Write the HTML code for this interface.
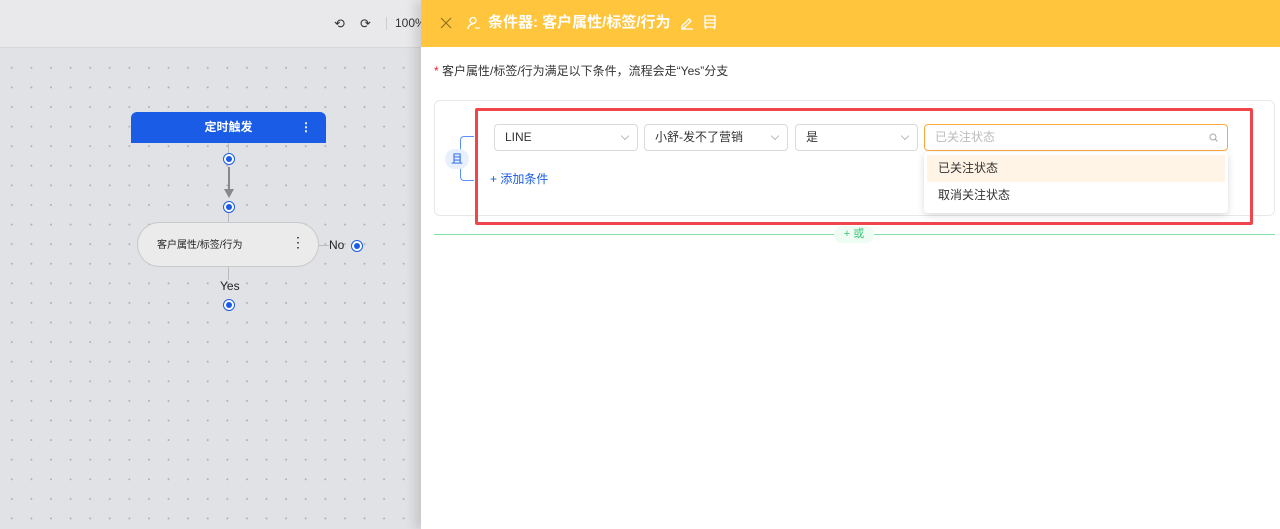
<!DOCTYPE html>
<html><head><meta charset="utf-8"><style>
*{box-sizing:border-box;margin:0;padding:0}
body{width:1280px;height:529px;overflow:hidden;position:relative;font-family:"Liberation Sans","Noto Sans CJK SC",sans-serif;background:#e1e2e5}
.top{position:absolute;left:0;top:0;width:421px;height:48px;background:#e9e9eb;border-bottom:1px solid #d6d6d9}
.canvas{position:absolute;left:0;top:49px;width:421px;height:480px;background-color:#e1e2e5;background-image:radial-gradient(circle,#b0b1b6 0.8px,transparent 1.1px);background-size:19.6px 19.6px;background-position:2px 9px}
.panel{position:absolute;left:421px;top:0;width:859px;height:529px;background:#fff;box-shadow:-6px 0 10px rgba(0,0,0,.12)}
.hdr{height:47px;background:#ffc53d;color:#fff;position:relative}
.abs{position:absolute}
.sel{position:absolute;top:124px;height:27px;border:1px solid #d9d9d9;border-radius:4px;font-size:12px;line-height:25px;color:#333;padding:0 10px;background:#fff}
.chev{position:absolute;right:9px;top:8px;width:6px;height:6px;border-right:1px solid #bbb;border-bottom:1px solid #bbb;transform:rotate(45deg)}
.dot{position:absolute;width:12px;height:12px;border-radius:50%;border:1.5px solid #1a5ce5;background:#fff}
.dot::after{content:"";position:absolute;left:1.5px;top:1.5px;width:6px;height:6px;border-radius:50%;background:#1a5ce5}
</style></head><body>
<div class="top">
<div class="abs" style="left:334px;top:16px;font-size:13px;color:#333">&#x27F2;</div>
<div class="abs" style="left:360px;top:16px;font-size:13px;color:#333">&#x27F3;</div>
<div class="abs" style="left:386px;top:17px;width:1px;height:13px;background:#ccc"></div>
<div class="abs" style="left:395px;top:16px;font-size:12px;color:#333">100%</div>
</div>
<div class="canvas"></div>
<div class="abs" style="left:131px;top:112px;width:195px;height:31px;background:#1a5ce5;border-radius:6px 6px 0 0;color:#fff;font-size:12px;font-weight:bold;text-align:center;line-height:31px">定时触发<span style="position:absolute;right:14px;top:0">&#8942;</span></div>
<div class="abs" style="left:228px;top:143px;width:1px;height:14px;background:#bbb"></div>
<div class="dot" style="left:223px;top:153px"></div>
<div class="abs" style="left:228px;top:167px;width:2px;height:24px;background:#888"></div>
<div class="abs" style="left:224px;top:189px;border-left:5px solid transparent;border-right:5px solid transparent;border-top:9px solid #888"></div>
<div class="dot" style="left:223px;top:201px"></div>
<div class="abs" style="left:228px;top:213px;width:1px;height:10px;background:#bbb"></div>
<div class="abs" style="left:137px;top:222px;width:182px;height:45px;background:#ebebec;border:1px solid #c9c9cc;border-radius:23px;font-size:10px;color:#222;padding:13px 0 0 19px">客户属性/标签/行为<span style="position:absolute;left:153px;top:11px;font-size:14px">&#8942;</span></div>
<div class="abs" style="left:319px;top:245px;width:10px;height:1px;background:#bbb"></div>
<div class="abs" style="left:329px;top:238px;font-size:12px;color:#222">No</div>
<div class="dot" style="left:351px;top:240px"></div>
<div class="abs" style="left:228px;top:267px;width:1px;height:13px;background:#bbb"></div>
<div class="abs" style="left:220px;top:279px;font-size:12px;color:#222">Yes</div>
<div class="dot" style="left:223px;top:299px"></div>

<div class="panel">
<div class="hdr">
<svg class="abs" style="left:19px;top:17px" width="12" height="12" viewBox="0 0 12 12" stroke="#8a7020" stroke-width="1.1"><path d="M1 1l10 10M11 1L1 11"/></svg>
<svg class="abs" style="left:46px;top:16px" width="14" height="14" viewBox="0 0 14 14" fill="none" stroke="#fff" stroke-width="1.3"><circle cx="6" cy="4.5" r="3"/><path d="M1 13c0-3 2.5-5 5-5M8 12h5"/></svg>
<div class="abs" style="left:67px;top:13px;font-size:15px;font-weight:bold;line-height:20px">条件器: 客户属性/标签/行为</div>
<svg class="abs" style="left:259px;top:16px" width="14" height="14" viewBox="0 0 14 14" fill="none" stroke="#fff" stroke-width="1.3"><path d="M2 10l7-7 2 2-7 7H2zM1 13h12"/></svg>
<svg class="abs" style="left:283px;top:15px" width="12" height="15" viewBox="0 0 12 15" fill="none" stroke="#fff" stroke-width="1.3"><path d="M1 1h10v11H1zM1 5h10M1 8h10M3 12l-2 2M9 12l2 2"/></svg>
</div>
<div class="abs" style="left:13px;top:63px;font-size:12px;line-height:16px;color:#333"><span style="color:#f5222d">*</span> 客户属性/标签/行为满足以下条件，流程会走“Yes”分支</div>
<div class="abs" style="left:13px;top:100px;width:841px;height:116px;border:1px solid #e8e8e8;border-radius:6px"></div>
<div class="abs" style="left:39px;top:136px;width:14px;height:45px;border:1px solid #5b8ff9;border-right:none;border-radius:4px 0 0 4px"></div>
<div class="abs" style="left:24px;top:149px;width:24px;height:20px;background:#e8f0fe;border-radius:10px;color:#1a5ce5;font-size:12px;text-align:center;line-height:20px">且</div>
<div class="sel" style="left:73px;width:144px">LINE<i class="chev"></i></div>
<div class="sel" style="left:223px;width:144px">小舒-发不了营销<i class="chev"></i></div>
<div class="sel" style="left:374px;width:123px">是<i class="chev"></i></div>
<div class="sel" style="left:503px;width:304px;border-color:#ffa940;color:#bbb">已关注状态<svg style="position:absolute;right:9px;top:8px" width="9" height="9" viewBox="0 0 9 9" fill="none" stroke="#aaa" stroke-width="1"><circle cx="4" cy="4" r="3"/><path d="M6 6l2.5 2.5"/></svg></div>
<div class="abs" style="left:69px;top:171px;font-size:12px;line-height:16px;color:#1a5ce5">+ 添加条件</div>
<div class="abs" style="left:503px;top:152px;width:304px;height:61px;background:#fff;border-radius:4px;box-shadow:0 2px 8px rgba(0,0,0,.15);padding:3px">
<div style="height:27px;background:#fff4e6;font-size:12px;line-height:27px;color:#333;padding:0 11px">已关注状态</div>
<div style="height:26px;font-size:12px;line-height:26px;color:#333;padding:0 11px">取消关注状态</div>
</div>
<div class="abs" style="left:54px;top:108px;width:778px;height:117px;border:3px solid #f0464b;border-radius:2px"></div>
<div class="abs" style="left:13px;top:234px;width:841px;height:1px;background:#7fe0a8"></div>
<div class="abs" style="left:413px;top:226px;width:40px;height:17px;background:#effcf3;border-radius:8px;color:#3cc478;font-size:11px;text-align:center;line-height:17px">+ 或</div>
</div>
</body></html>
